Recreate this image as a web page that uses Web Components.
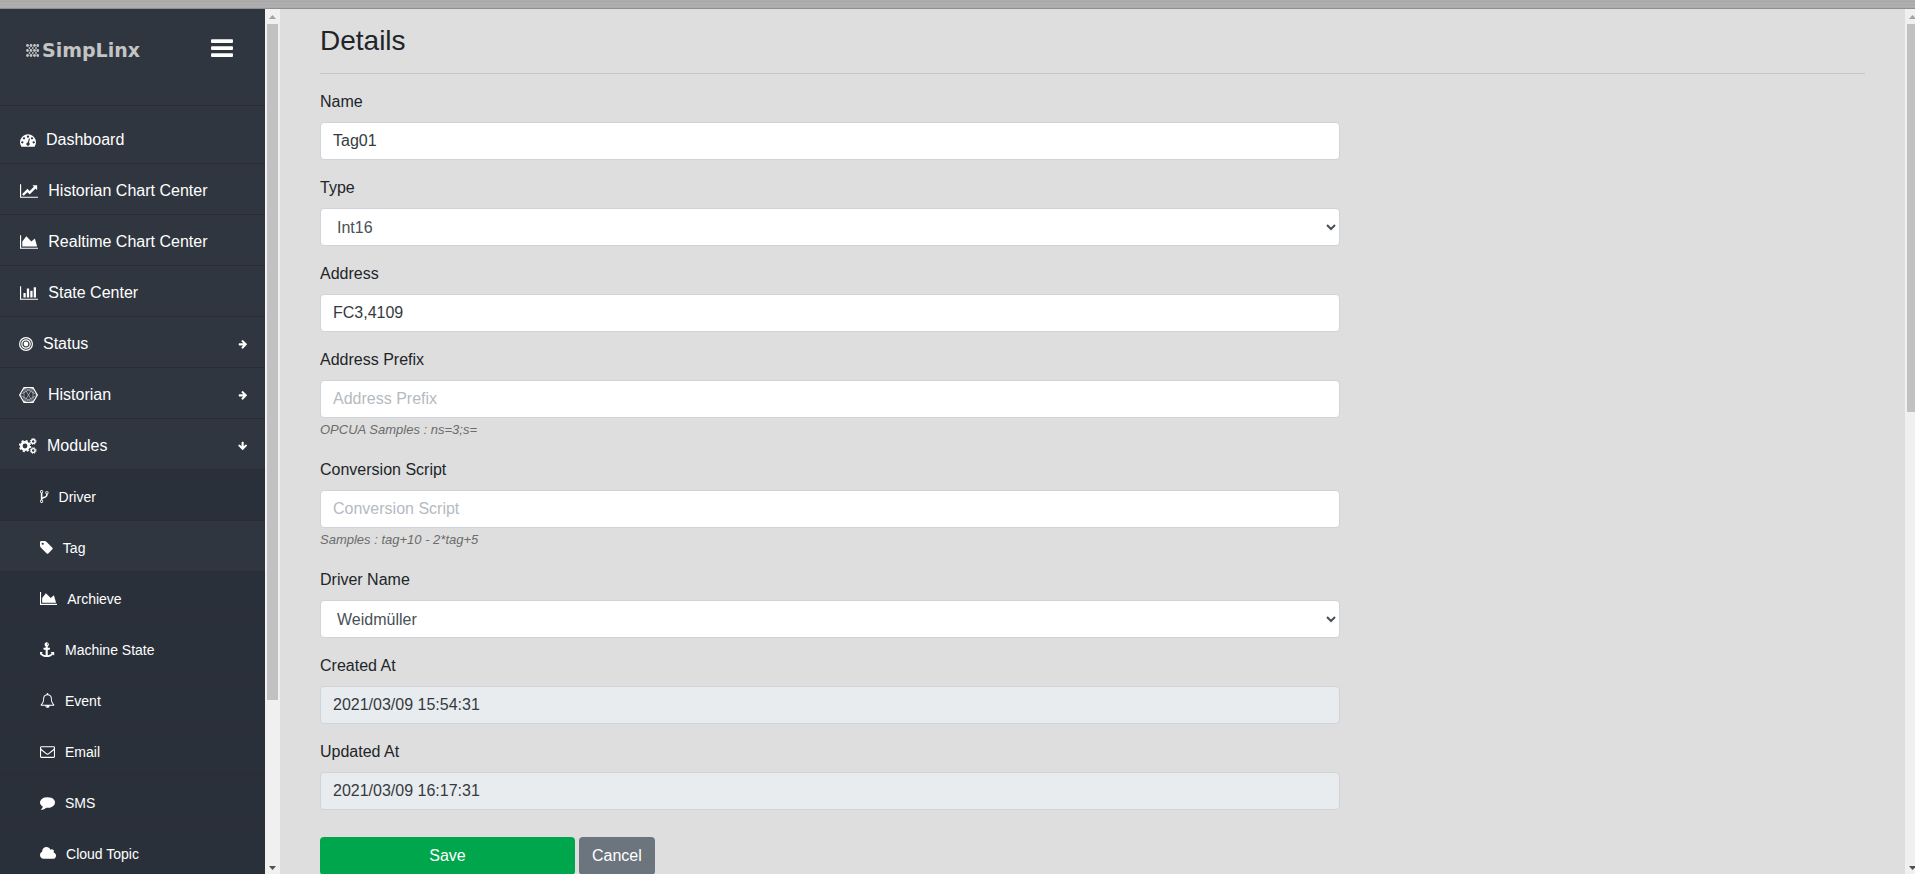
<!DOCTYPE html>
<html lang="en">
<head>
<meta charset="utf-8">
<title>SimpLinx - Tag Details</title>
<style>
  body {
    margin: 0;
    font: 16px/24px "Liberation Sans", Arial, sans-serif;
    color: #212529;
    background: #dedede;
  }
</style>
</head>
<body>
<sl-layout>
  <sl-sidebar slot="sidebar">
    <sl-nav-item icon="dashboard">Dashboard</sl-nav-item>
    <sl-nav-item icon="line">Historian Chart Center</sl-nav-item>
    <sl-nav-item icon="area">Realtime Chart Center</sl-nav-item>
    <sl-nav-item icon="bar">State Center</sl-nav-item>
    <sl-nav-item icon="rings" arrow="right">Status</sl-nav-item>
    <sl-nav-item icon="hexagon" arrow="right">Historian</sl-nav-item>
    <sl-nav-item icon="cogs" arrow="down">Modules</sl-nav-item>
    <sl-nav-item icon="fork" sub>Driver</sl-nav-item>
    <sl-nav-item icon="tag" sub active>Tag</sl-nav-item>
    <sl-nav-item icon="area" sub>Archieve</sl-nav-item>
    <sl-nav-item icon="anchor" sub>Machine State</sl-nav-item>
    <sl-nav-item icon="bell" sub>Event</sl-nav-item>
    <sl-nav-item icon="envelope" sub>Email</sl-nav-item>
    <sl-nav-item icon="comment" sub>SMS</sl-nav-item>
    <sl-nav-item icon="cloud" sub>Cloud Topic</sl-nav-item>
  </sl-sidebar>
  <sl-details heading="Details">
    <sl-field label="Name" value="Tag01"></sl-field>
    <sl-field label="Type" type="select" value="Int16"></sl-field>
    <sl-field label="Address" value="FC3,4109"></sl-field>
    <sl-field label="Address Prefix" placeholder="Address Prefix">OPCUA Samples : ns=3;s=</sl-field>
    <sl-field label="Conversion Script" placeholder="Conversion Script">Samples : tag+10 - 2*tag+5</sl-field>
    <sl-field label="Driver Name" type="select" value="Weidmüller"></sl-field>
    <sl-field label="Created At" value="2021/03/09 15:54:31" readonly></sl-field>
    <sl-field label="Updated At" value="2021/03/09 16:17:31" readonly></sl-field>
    <sl-button slot="actions" kind="save">Save</sl-button>
    <sl-button slot="actions" kind="cancel">Cancel</sl-button>
  </sl-details>
</sl-layout>

<script>
// each icon: [viewBox width, viewBox height, markup]
const ICONS = {
  dashboard: [1792, 1792, '<path d="M384 1152q0-53-37.5-90.5t-90.5-37.5-90.5 37.5-37.5 90.5 37.5 90.5 90.5 37.5 90.5-37.5 37.5-90.5zm192-448q0-53-37.5-90.5t-90.5-37.5-90.5 37.5-37.5 90.5 37.5 90.5 90.5 37.5 90.5-37.5 37.5-90.5zm428 481l101-382q6-26-7.5-48.5t-38.5-29.5-48 6.5-30 39.5l-101 382q-60 5-107 43.5t-63 98.5q-20 77 20 146t117 89 146-20 89-117q16-60-6-117t-72-91zm660-33q0-53-37.5-90.5t-90.5-37.5-90.5 37.5-37.5 90.5 37.5 90.5 90.5 37.5 90.5-37.5 37.5-90.5zm-640-640q0-53-37.5-90.5t-90.5-37.5-90.5 37.5-37.5 90.5 37.5 90.5 90.5 37.5 90.5-37.5 37.5-90.5zm448 192q0-53-37.5-90.5t-90.5-37.5-90.5 37.5-37.5 90.5 37.5 90.5 90.5 37.5 90.5-37.5 37.5-90.5zm320 448q0 261-141 483-19 29-54 29h-1402q-35 0-54-29-141-221-141-483 0-182 71-348t191-286 286-191 348-71 348 71 286 191 191 286 71 348z"/>'],
  line: [2048, 1792, '<path d="M2048 1536v128h-2048v-1536h128v1408h1920zm-128-1248v435q0 21-19.5 29.5t-35.5-7.5l-121-121-633 633q-10 10-23 10t-23-10l-233-233-416 416-192-192 585-585q10-10 23-10t23 10l233 233 464-464-121-121q-16-16-7.5-35.5t29.5-19.5h435q14 0 23 9t9 23z"/>'],
  area: [2048, 1792, '<path d="M2048 1536v128h-2048v-1536h128v1408h1920zm-384-1024l256 896h-1664v-576l448-576 576 576z"/>'],
  bar: [2048, 1792, '<path d="M640 896v512h-256v-512h256zm384-512v1024h-256v-1024h256zm1024 1152v128h-2048v-1536h128v1408h1920zm-640-896v768h-256v-768h256zm384-384v1152h-256v-1152h256z"/>'],
  rings: [14, 16, '<g fill="none" stroke="currentColor" stroke-width="1.2"><circle cx="7" cy="8" r="6.4"/><circle cx="7" cy="8" r="4.2"/></g><circle cx="7" cy="8" r="2.4"/>'],
  hexagon: [19, 16, '<g fill="none" stroke="currentColor" stroke-linejoin="round"><path d="M5 .6h9L18.4 8 14 15.4H5L.6 8z" stroke-width="1.1"/><path d="M5 .6l9 14.8M14 .6L5 15.4M.6 8l13.400-7.400M.6 8l13.400 7.400M18.4 8L5 .6M18.4 8L5 15.4M5 .6v14.8M14 .6v14.8" stroke-width=".7" opacity=".7"/></g>'],
  cogs: [18, 16, '<g fill="none" stroke="currentColor"><circle cx="6" cy="8" r="3.7" stroke-width="2.6"/><circle cx="6" cy="8" r="5.3" stroke-width="1.7" stroke-dasharray="2.1 2.06"/><circle cx="14.2" cy="3.4" r="1.9" stroke-width="1.4"/><circle cx="14.2" cy="3.4" r="2.9" stroke-width="1" stroke-dasharray="1.2 1.08"/><circle cx="14.2" cy="12.5" r="1.9" stroke-width="1.4"/><circle cx="14.2" cy="12.5" r="2.9" stroke-width="1" stroke-dasharray="1.2 1.08"/></g>'],
  fork: [1024, 1792, '<path transform="translate(-384)" d="M672 1472q0-40-28-68t-68-28-68 28-28 68 28 68 68 28 68-28 28-68zm0-1152q0-40-28-68t-68-28-68 28-28 68 28 68 68 28 68-28 28-68zm640 128q0-40-28-68t-68-28-68 28-28 68 28 68 68 28 68-28 28-68zm96 0q0 52-26 96.5t-70 69.5q-2 287-226 414-67 38-203 81-128 40-169.5 71t-41.5 100v26q44 25 70 69.5t26 96.5q0 80-56 136t-136 56-136-56-56-136q0-52 26-96.5t70-69.5v-820q-44-25-70-69.5t-26-96.5q0-80 56-136t136-56 136 56 56 136q0 52-26 96.5t-70 69.5v497q54-26 154-57 55-17 87.5-29.5t70.5-31 59-39.5 40.5-51 28-69.5 8.5-91.5q-44-25-70-69.5t-26-96.5q0-80 56-136t136-56 136 56 56 136z"/>'],
  tag: [1536, 1792, '<path transform="translate(-128)" d="M576 448q0-53-37.5-90.5t-90.5-37.5-90.5 37.5-37.5 90.5 37.5 90.5 90.5 37.5 90.5-37.5 37.5-90.5zm1067 576q0 53-37 90l-491 492q-39 37-91 37-53 0-90-37l-715-716q-38-37-64.5-101t-26.5-117v-416q0-52 38-90t90-38h416q53 0 117 26.5t102 64.5l715 714q37 39 37 91z"/>'],
  anchor: [1792, 1792, '<path d="M960 256q0-26-19-45t-45-19-45 19-19 45 19 45 45 19 45-19 19-45zm736 960v352q0 22-20 30-8 2-12 2-12 0-23-9l-93-93q-119 143-318.5 226.5t-429.5 83.5-429.5-83.5-318.5-226.5l-93 93q-9 9-23 9-4 0-12-2-20-8-20-30v-352q0-14 9-23t23-9h352q22 0 30 20 8 19-7 35l-100 100q67 91 189.5 153.5t271.5 82.5v-647h-192q-26 0-45-19t-19-45v-128q0-26 19-45t45-19h192v-163q-58-34-93-92.5t-35-128.5q0-106 75-181t181-75 181 75 75 181q0 70-35 128.5t-93 92.5v163h192q26 0 45 19t19 45v128q0 26-19 45t-45 19h-192v647q149-20 271.5-82.5t189.5-153.5l-100-100q-15-16-7-35 8-20 30-20h352q14 0 23 9t9 23z"/>'],
  bell: [1792, 1792, '<path d="M912 1696q0-16-16-16-59 0-101.5-42.5t-42.5-101.5q0-16-16-16t-16 16q0 73 51.5 124.5t124.5 51.5q16 0 16-16zm-666-288h1300q-266-300-266-832 0-51-24-105t-69-103-121.5-80.5-169.5-31.5-169.5 31.5-121.5 80.5-69 103-24 105q0 532-266 832zm1482 0q0 52-38 90t-90 38h-448q0 106-75 181t-181 75-181-75-75-181h-448q-52 0-90-38t-38-90q50-42 91-88t85-119.5 74.5-158.5 50-206 19.5-260q0-152 117-282.5t307-158.5q-8-19-8-39 0-40 28-68t68-28 68 28 28 68q0 20-8 39 190 28 307 158.5t117 282.5q0 139 19.5 260t50 206 74.5 158.5 85 119.5 91 88z"/>'],
  envelope: [1792, 1792, '<path d="M1664 1504v-768q-32 36-69 66-268 206-426 338-51 43-83 67t-86.5 48.5-102.5 24.5h-2q-48 0-102.5-24.5t-86.5-48.5-83-67q-158-132-426-338-37-30-69-66v768q0 13 9.5 22.5t22.5 9.5h1472q13 0 22.5-9.5t9.5-22.5zm0-1051v-24.5l-.5-13-3-12.5-5.5-9-9-7.5-14-2.5h-1472q-13 0-22.5 9.5t-9.5 22.5q0 168 147 284 193 152 401 317 6 5 35 29.5t46 37.5 44.5 31.5 50.5 27.5 43 9h2q20 0 43-9t50.5-27.5 44.5-31.5 46-37.5 35-29.5q208-165 401-317 54-43 100.5-115.5t46.5-131.5zm128-37v1088q0 66-47 113t-113 47h-1472q-66 0-113-47t-47-113v-1088q0-66 47-113t113-47h1472q66 0 113 47t47 113z"/>'],
  comment: [1792, 1792, '<path d="M1792 896q0 174-120 321.5t-326 233-450 85.5q-70 0-145-8-198 175-460 242-49 14-114 22-17 2-30.5-9t-17.5-29v-1q-3-4-.5-12t2-10 4.5-9.5l6-9 7-8.5 8-9q7-8 31-34.5t34.5-38 31-39.5 32.5-51 27-59 26-76q-157-89-247.5-220t-90.5-281q0-130 71-248.5t191-204.5 286-136.5 348-50.5q244 0 450 85.5t326 233 120 321.5z"/>'],
  cloud: [1920, 1792, '<path transform="translate(-64)" d="M1984 1152q0 159-112.5 271.5t-271.5 112.5h-1088q-185 0-316.5-131.5t-131.5-316.5q0-132 71-241.5t187-163.5q-2-28-2-43 0-212 150-362t362-150q158 0 286.5 88t187.5 230q70-62 166-62 106 0 181 75t75 181q0 75-41 138 129 30 213 134.5t84 239.5z"/>'],
  right: [1792, 1792, '<path d="M1600 960q0 54-37 91l-651 651q-39 37-91 37-51 0-90-37l-75-75q-38-38-38-91t38-91l293-293h-704q-52 0-84.5-37.5t-32.5-90.5v-128q0-53 32.5-90.5t84.5-37.5h704l-293-294q-38-36-38-90t38-90l75-75q38-38 90-38 53 0 91 38l651 651q37 35 37 90z"/>'],
  down: [1792, 1792, '<path transform="rotate(90 896 896)" d="M1600 960q0 54-37 91l-651 651q-39 37-91 37-51 0-90-37l-75-75q-38-38-38-91t38-91l293-293h-704q-52 0-84.5-37.5t-32.5-90.5v-128q0-53 32.5-90.5t84.5-37.5h704l-293-294q-38-36-38-90t38-90l75-75q38-38 90-38 53 0 91 38l651 651q37 35 37 90z"/>'],
  bars: [22, 18, '<rect y=".3" width="22" height="3.700" rx="1"/><rect y="7.300" width="22" height="3.700" rx="1"/><rect y="14.300" width="22" height="3.700" rx="1"/>'],
  dots: [13, 13, [1.5, 6.5, 11.5].map(y => [1.5, 5, 8.5, 11.7].map(x => `<circle cx="${x}" cy="${y}" r="1.4"/>`).join("")).join("")
    + [4, 9].map(y => [3.5, 6.8, 10].map(x => `<circle cx="${x}" cy="${y}" r=".9"/>`).join("")).join("")]
};

class SlIcon extends HTMLElement {
  connectedCallback() {
    const [w, h, body] = ICONS[this.getAttribute("name")];
    this.attachShadow({ mode: "open" }).innerHTML = /* html */`
    <style>
      :host { display: inline-flex; flex: none; }
      svg { height: var(--icon-size, 16px); fill: currentColor; }
    </style>
    <svg viewBox="0 0 ${w} ${h}" aria-hidden="true">${body}</svg>`;
  }
}

class SlScrollbar extends HTMLElement {
  connectedCallback() {
    this.attachShadow({ mode: "open" }).innerHTML = /* html */`
    <style>
      :host {
        display: flex;
        flex-direction: column;
        flex: none;
        width: 15px;
        background: #f0f0f0;
      }
      svg { width: 15px; height: 15px; flex: none; }
      .track { flex: 1; padding: 0 2px; }
      .thumb { height: ${this.getAttribute("thumb")}; background: #c1c1c1; }
    </style>
    <svg viewBox="0 0 15 15"><path d="M4 10L7.500 6L11 10z" fill="#a3a3a3"/></svg>
    <div class="track"><div class="thumb"></div></div>
    <svg viewBox="0 0 15 15"><path d="M4 7L7.500 11L11 7z" fill="#505050"/></svg>`;
  }
}

class SlLayout extends HTMLElement {
  connectedCallback() {
    this.attachShadow({ mode: "open" }).innerHTML = /* html */`
    <style>
      :host {
        display: flex;
        flex-direction: column;
        height: 100vh;
        overflow: hidden;
      }
      .strip {
        flex: none;
        height: 8px;
        border-bottom: 1px solid #8f8f8f;
        background: linear-gradient(#b0b0b0, #a6a6a6 25%, #b4b4b4 40%, #a9a9a9 60%, #b2b2b2 80%, #a8a8a8);
      }
      .body { display: flex; flex: 1; min-height: 0; }
      main { flex: 1; min-width: 0; overflow: hidden; }
      /* the page scrollbar runs off the window edge */
      .edge { display: flex; width: 10px; overflow: hidden; }
    </style>
    <div class="strip"></div>
    <div class="body">
      <slot name="sidebar"></slot>
      <sl-scrollbar thumb="81%"></sl-scrollbar>
      <main><slot></slot></main>
      <div class="edge"><sl-scrollbar thumb="46.5%"></sl-scrollbar></div>
    </div>`;
  }
}

class SlSidebar extends HTMLElement {
  connectedCallback() {
    this.attachShadow({ mode: "open" }).innerHTML = /* html */`
    <style>
      :host {
        display: block;
        flex: none;
        width: 265px;
        overflow: hidden;
        background: #2f3640;
        color: #fff;
      }
      header {
        display: flex;
        align-items: flex-start;
        justify-content: space-between;
        height: 66px;
        padding: 30px 32px 0 26px;
        border-bottom: 1px solid #2b2d2f;
      }
      .logo {
        display: flex;
        align-items: center;
        gap: 3px;
        color: #c4c4c4;
        font: bold 19px/22px "DejaVu Sans", sans-serif;
        text-decoration: none;
        --icon-size: 13px;
      }
      button {
        display: flex;
        padding: 0;
        border: 0;
        background: none;
        color: inherit;
        --icon-size: 18px;
      }
      nav { padding-top: 7px; }
    </style>
    <header>
      <a class="logo" href="#"><sl-icon name="dots"></sl-icon>SimpLinx</a>
      <button type="button" aria-label="Toggle menu"><sl-icon name="bars"></sl-icon></button>
    </header>
    <nav><slot></slot></nav>`;
  }
}

class SlNavItem extends HTMLElement {
  connectedCallback() {
    const arrow = this.getAttribute("arrow");
    this.attachShadow({ mode: "open" }).innerHTML = /* html */`
    <style>
      :host { display: block; }
      a {
        display: flex;
        align-items: center;
        gap: 10px;
        box-sizing: border-box;
        height: 51px;
        padding: 3px 18px 0 20px;
        border-bottom: 1px solid #2b2d2f;
        color: #fff;
        text-decoration: none;
      }
      :host([arrow]) a { padding-left: 19px; padding-right: 17px; }
      :host([sub]) a {
        padding-left: 40px;
        background: #2a3039;
        font-size: 14px;
        --icon-size: 15px;
      }
      :host([sub][active]) a { background: #2f3640; }
      span { flex: 1; }
      .arrow { --icon-size: 10px; }
    </style>
    <a href="#">
      <sl-icon name="${this.getAttribute("icon")}"></sl-icon>
      <span><slot></slot></span>
      ${arrow ? `<sl-icon class="arrow" name="${arrow}"></sl-icon>` : ""}
    </a>`;
  }
}

class SlDetails extends HTMLElement {
  connectedCallback() {
    this.attachShadow({ mode: "open" }).innerHTML = /* html */`
    <style>
      :host { display: block; padding: 15px 40px 0; }
      h3 { margin: 0; font-size: 28px; line-height: 34px; font-weight: 500; }
      hr { margin: 15px 0 16px; border: 0; border-top: 1px solid #c4c5c6; }
      form { width: 66%; }
      .actions { display: flex; gap: 4px; padding-top: 11px; }
    </style>
    <h3>${this.getAttribute("heading")}</h3>
    <hr>
    <form>
      <slot></slot>
      <div class="actions"><slot name="actions"></slot></div>
    </form>`;
  }
}

class SlField extends HTMLElement {
  connectedCallback() {
    const value = this.getAttribute("value") || "";
    const control = this.getAttribute("type") === "select"
      ? `<select id="control"><option selected>${value}</option></select>`
      : `<input id="control" type="text" value="${value}"
          placeholder="${this.getAttribute("placeholder") || ""}" ${this.hasAttribute("readonly") ? "readonly" : ""}>`;

    this.attachShadow({ mode: "open" }).innerHTML = /* html */`
    <style>
      :host { display: block; margin-bottom: 16px; }
      label { display: block; margin-bottom: 8px; }
      input, select {
        display: block;
        box-sizing: border-box;
        width: 100%;
        height: 38px;
        padding: 6px 12px;
        border: 1px solid #ced4da;
        border-radius: 4px;
        background: #fff;
        color: #343a40;
        font: inherit;
      }
      select { color: #495057; }
      input::placeholder { color: #b5babf; }
      input[readonly] { background: #e9ecef; }
      small {
        display: block;
        color: #6c6c6c;
        font-size: 13px;
        font-style: italic;
      }
    </style>
    <label for="control">${this.getAttribute("label")}</label>
    ${control}
    ${this.textContent ? "<small><slot></slot></small>" : ""}`;
  }
}

class SlButton extends HTMLElement {
  connectedCallback() {
    const save = this.getAttribute("kind") === "save";
    this.attachShadow({ mode: "open" }).innerHTML = /* html */`
    <style>
      :host { display: block; }
      :host([kind="save"]) { width: 25%; }
      button {
        width: 100%;
        height: 38px;
        padding: 0 13px;
        border: 0;
        border-radius: 4px;
        background: ${save ? "#00a64c" : "#6c757d"};
        color: #fff;
        font: inherit;
      }
    </style>
    <button type="${save ? "submit" : "button"}"><slot></slot></button>`;
  }
}

customElements.define("sl-icon", SlIcon);
customElements.define("sl-scrollbar", SlScrollbar);
customElements.define("sl-layout", SlLayout);
customElements.define("sl-sidebar", SlSidebar);
customElements.define("sl-nav-item", SlNavItem);
customElements.define("sl-details", SlDetails);
customElements.define("sl-field", SlField);
customElements.define("sl-button", SlButton);
</script>
</body>
</html>
